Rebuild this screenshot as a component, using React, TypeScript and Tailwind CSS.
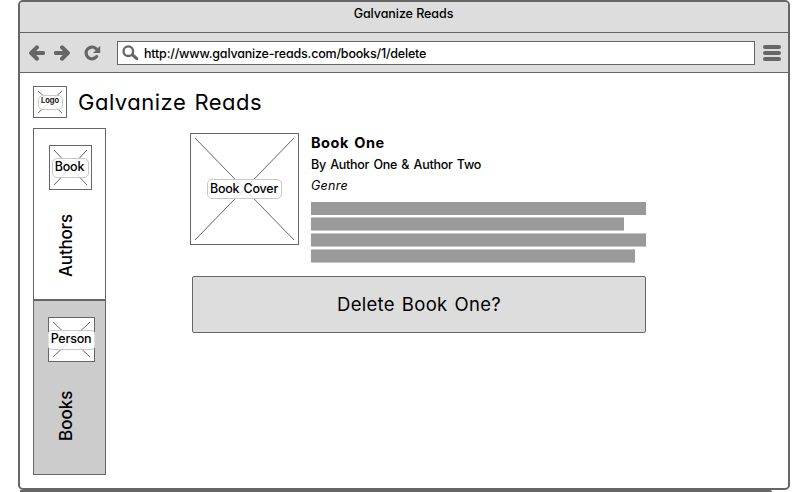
import type { ReactNode } from "react";

type PlaceholderProps = {
  width: number;
  height: number;
  inset?: number;
  className?: string;
  labelClass: string;
  children: ReactNode;
};

function Placeholder({ width, height, inset = 5, className = "", labelClass, children }: PlaceholderProps) {
  const right = width - inset;
  const bottom = height - inset;
  return (
    <div
      className={`relative flex shrink-0 items-center justify-center overflow-hidden bg-white ${className}`}
      style={{ width, height }}
    >
      <svg className="absolute inset-0" width={width} height={height} fill="none" stroke="#666" strokeWidth="1">
        <path d={`M${inset} ${inset}L${right} ${bottom}M${right} ${inset}L${inset} ${bottom}`} />
      </svg>
      <div className="absolute inset-0 border border-[#666]" />
      <span
        className={`relative flex shrink-0 items-center justify-center whitespace-nowrap border border-[#c8c8c8] bg-white/80 ${labelClass}`}
      >
        {children}
      </span>
    </div>
  );
}

function ArrowIcon({ flip = false }: { flip?: boolean }) {
  return (
    <svg width="16" height="16" viewBox="0 0 16 16" className={flip ? "-scale-x-100" : ""}>
      <path d="M8 2.300L2.200 8L8 13.700M3 8H14.200" fill="none" stroke="#666" strokeWidth="4" strokeLinecap="round" strokeLinejoin="round" />
      <path d="M0 8L4 4V12Z" fill="#666" />
    </svg>
  );
}

function ReloadIcon() {
  return (
    <svg width="17" height="16" viewBox="0 0 17 16">
      <path d="M12.600 11.600A5.900 5.900 0 1 1 12 3.600" fill="none" stroke="#666" strokeWidth="3.200" strokeLinecap="round" />
      <path d="M16.200 .8V8H9L12 5Z" fill="#666" />
    </svg>
  );
}

function SearchIcon() {
  return (
    <svg width="17" height="16" viewBox="0 0 17 16" fill="none" stroke="#666" strokeLinecap="round">
      <circle cx="6.300" cy="6.200" r="4.800" strokeWidth="2.300" />
      <path d="M10.600 10L14.800 13.700" strokeWidth="3" />
    </svg>
  );
}

function Toolbar() {
  return (
    <div className="flex h-10 shrink-0 items-start border-b border-[#666]">
      <div className="flex pl-[9px] pt-3">
        <ArrowIcon />
        <div className="w-[9px]" />
        <ArrowIcon flip />
        <div className="w-[14px]" />
        <ReloadIcon />
      </div>
      <div className="ml-4 mt-2 flex h-6 w-[638px] items-center border border-[#666] bg-white pl-1">
        <SearchIcon />
        <span className="ml-[5px] mt-[2px] whitespace-nowrap text-[12.500px] font-[450] leading-none tracking-[-0.190px]">
          http://www.galvanize-reads.com/books/1/delete
        </span>
      </div>
      <div className="ml-2 mt-3 flex w-[18px] flex-col gap-0.5">
        <div className="h-1 rounded-xs bg-[#666]" />
        <div className="h-1 rounded-xs bg-[#666]" />
        <div className="h-1 rounded-xs bg-[#666]" />
      </div>
    </div>
  );
}

function Sidebar() {
  return (
    <nav className="flex h-[347px] w-[73px] shrink-0 flex-col">
      <div className="flex h-[172px] flex-col items-center border border-[#666] bg-white pt-4">
        <Placeholder width={43} height={45} className="ml-[2px]" labelClass="h-5 w-[37px] rounded-[5px] pb-px pr-[2px] text-[12.500px] font-[450] leading-none tracking-[-0.150px]">
          Book
        </Placeholder>
        <span className="mr-2 mt-[25px] flex h-[61px] w-5 rotate-180 items-center justify-center whitespace-nowrap text-[17px] font-[450] leading-5 tracking-[-0.200px] [writing-mode:vertical-rl]">
          Authors
        </span>
      </div>
      <div className="flex h-[175px] flex-col items-center border border-[#666] bg-[#ccc] pt-4">
        <Placeholder width={47} height={45} className="ml-1" labelClass="h-5 w-[49px] rounded-[5px] pb-px pr-px text-[12.500px] font-[450] leading-none tracking-[-0.200px]">
          Person
        </Placeholder>
        <span className="mr-2 mt-[28px] flex h-[51px] w-5 rotate-180 items-center justify-center whitespace-nowrap text-[17px] font-[450] leading-5 [writing-mode:vertical-rl]">
          Books
        </span>
      </div>
    </nav>
  );
}

function BookDetails() {
  return (
    <div className="flex">
      <Placeholder width={109} height={112} labelClass="h-5 w-[75px] rounded-[5px] pr-px text-[12.500px] font-[450] leading-none tracking-[-0.200px]">
        <span className="[word-spacing:1px]">Book Cover</span>
      </Placeholder>
      <div className="ml-3 w-[335px]">
        <h2 className="whitespace-nowrap text-[14.500px] font-bold leading-[19px] tracking-[0.500px] [word-spacing:1.500px]">Book One</h2>
        <p className="mt-[3px] whitespace-nowrap text-[12.500px] font-[450] leading-[19px] tracking-[-0.260px] [word-spacing:1.200px]">By Author One &amp; Author Two</p>
        <p className="mt-[3px] whitespace-nowrap text-[12.500px] font-[450] italic leading-[18px] tracking-[0.300px]">Genre</p>
        <div className="mt-[7px] flex flex-col gap-[3px]">
          <div className="h-[13px] bg-[#999]" />
          <div className="-mt-px h-[14px] w-[313px] border-y border-[#c4c4c4] bg-[#999]" />
          <div className="-mt-px h-[14px] border-y border-[#c4c4c4] bg-[#999]" />
          <div className="-mt-px h-[14px] w-[324px] border-y border-[#c4c4c4] bg-[#999]" />
        </div>
      </div>
    </div>
  );
}

export default function App() {
  return (
    <div className="h-[492px] w-[811px] overflow-hidden bg-white pl-[18px] font-['Inter','Open_Sans',sans-serif] text-black [font-feature-settings:'cv11'_1,'calt'_0]">
      <div className="flex h-[490px] w-[772px] flex-col overflow-hidden rounded-[5px] border-2 border-[#666] bg-white">
        <div className="bg-[#ddd]">
          <div className="h-[31px] border-b border-[#666] pr-px text-center text-[12.500px] font-[450] leading-[23px] tracking-[-0.060px]">
            Galvanize Reads
          </div>
          <Toolbar />
        </div>
        <div className="pl-[13px] pt-[13px]">
          <header className="flex h-8 items-center">
            <Placeholder width={34} height={32} labelClass="h-[15px] w-[25px] rounded-[5px] pb-[2px] text-[7.500px] font-semibold leading-none">
              Logo
            </Placeholder>
            <h1 className="ml-[11px] whitespace-nowrap text-[22px] leading-none tracking-[0.500px] [word-spacing:1.500px]">Galvanize Reads</h1>
          </header>
          <div className="mt-[10px] flex">
            <Sidebar />
            <main className="ml-[84px] mt-[5px]">
              <BookDetails />
              <button className="ml-[2px] mt-[13px] block h-[57px] w-[454px] rounded-xs border border-[#666] bg-[#ddd] text-[18.500px] leading-none tracking-[0.300px] [word-spacing:1.500px]">
                Delete Book One?
              </button>
            </main>
          </div>
        </div>
      </div>
      <div className="ml-[2px] h-[2px] w-[752px] rounded-tr-[2px] bg-[#666]" />
    </div>
  );
}
